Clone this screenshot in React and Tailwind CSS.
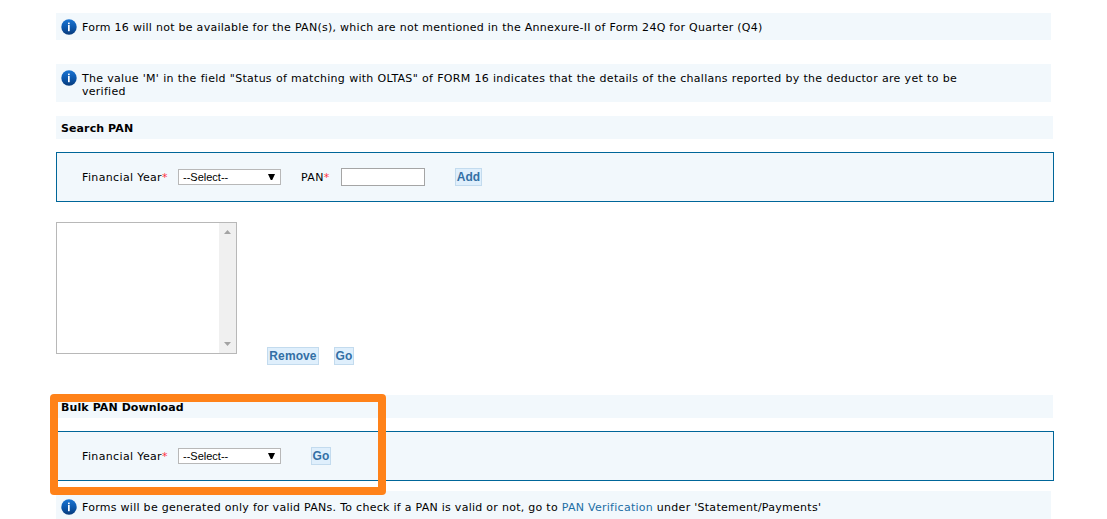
import { useState } from 'react'

const InfoIcon = () => (
  <svg width="16" height="16" viewBox="0 0 16 16" className="shrink-0">
    <defs>
      <linearGradient id="info" x1="0" y1="0" x2="0" y2="1">
        <stop offset="0" stopColor="#1a74d2" />
        <stop offset="0.55" stopColor="#0c57ac" />
        <stop offset="1" stopColor="#083a7a" />
      </linearGradient>
    </defs>
    <circle cx="8" cy="8" r="7.7" fill="url(#info)" />
    <rect x="7" y="3.6" width="1.7" height="1.6" fill="#fff" />
    <rect x="7" y="6" width="1.7" height="6.2" fill="#fff" />
  </svg>
)

const Notice = ({ className, children }) => (
  <div className={`flex w-[995px] bg-[#f2f8fc] pl-[5px] ${className}`}>
    <InfoIcon />
    <p className="ml-[5px] mt-[2px] w-[875px] text-justify leading-[13px] tracking-[0.275px]">{children}</p>
  </div>
)

const Title = ({ className, children }) => (
  <h2 className={`h-[23px] w-[997px] bg-[#f2f8fc] pl-[5px] pt-px text-[11px] font-bold leading-[23px] tracking-[0.1px] ${className}`}>{children}</h2>
)

const Label = ({ children }) => (
  <label className="block whitespace-nowrap pt-[2px] tracking-[0.36px]">
    {children}
    <span className="text-[#ff3040]">*</span>
  </label>
)

const Button = ({ className, children }) => (
  <button
    type="button"
    className={`flex h-[18px] items-center justify-center whitespace-nowrap border border-[#c3dbee] bg-[#dfeffc] font-['Liberation_Sans',sans-serif] text-[12px] font-bold leading-none tracking-[0.1px] text-[#336fa5] ${className}`}
  >
    {children}
  </button>
)

const YearSelect = () => (
  <div className="relative h-4 w-[103px]">
    <select className="block h-4 w-full appearance-none border border-[#b8b8b8] bg-white pl-1 font-['Liberation_Sans',sans-serif] text-[11px] leading-[14px] tracking-normal text-black">
      <option>--Select--</option>
    </select>
    <svg width="7" height="6" viewBox="0 0 7 6" className="pointer-events-none absolute right-[6px] top-[5px]">
      <path d="M0 0h7L4.2 6H2.8z" fill="#000" />
    </svg>
  </div>
)

const Panel = ({ children }) => (
  <div className="mt-[13px] flex h-[50px] w-[998px] items-center border border-[#006699] bg-[#f2f8fc] pl-[25px]">
    {children}
  </div>
)

const App = () => {
  const [pan, setPan] = useState('')

  return (
    <div className="relative h-[519px] w-[1107px] overflow-hidden bg-white pl-14 pt-[13px] font-['DejaVu_Sans',sans-serif] text-[11px] text-black">
      <Notice className="h-[27px] pt-[6px]">
        Form 16 will not be available for the PAN(s), which are not mentioned in the Annexure-II of Form 24Q for Quarter (Q4)
      </Notice>
      <Notice className="mt-6 h-[38px] pt-[6px]">
        The value 'M' in the field "Status of matching with OLTAS" of FORM 16 indicates that the details of the challans reported by the deductor are yet to be verified
      </Notice>

      <Title className="mt-[14px]">Search PAN</Title>
      <Panel>
        <div className="w-24">
          <Label>Financial Year</Label>
        </div>
        <YearSelect />
        <div className="ml-5 w-10">
          <Label>PAN</Label>
        </div>
        <input
          type="text"
          value={pan}
          onChange={(e) => setPan(e.target.value)}
          className="h-[18px] w-[84px] border border-[#a5a5a5] bg-white px-1"
        />
        <Button className="ml-[30px] w-[27px]">Add</Button>
      </Panel>

      <div className="mt-5 flex h-[143px] items-start">
        <div className="flex h-[132px] w-[181px] justify-end border border-[#b8b8b8] bg-white">
          <div className="flex h-full w-[17px] flex-col items-center justify-between bg-[#f0f0f0] py-[7px]">
            <svg width="7" height="4" viewBox="0 0 7 4">
              <path d="M3.5 0 7 4H0z" fill="#a3a3a3" />
            </svg>
            <svg width="7" height="4" viewBox="0 0 7 4">
              <path d="M0 0h7L3.5 4z" fill="#a3a3a3" />
            </svg>
          </div>
        </div>
        <Button className="ml-[30px] w-[52px] self-end">Remove</Button>
        <Button className="ml-[15px] w-5 self-end">Go</Button>
      </div>

      <Title className="mt-[30px]">Bulk PAN Download</Title>
      <Panel>
        <div className="w-24">
          <Label>Financial Year</Label>
        </div>
        <YearSelect />
        <Button className="ml-[30px] w-5">Go</Button>
      </Panel>

      <Notice className="mt-[10px] h-7 pt-2">
        Forms will be generated only for valid PANs. To check if a PAN is valid or not, go to{' '}
        <a href="#" className="text-[#1c6ea4]">PAN Verification</a> under 'Statement/Payments'
      </Notice>

      {/* highlight around the bulk download section */}
      <div className="pointer-events-none absolute left-[50px] top-[394px] h-[101px] w-[336px] rounded-[4px] bg-[#ff8219] [clip-path:polygon(evenodd,0_0,100%_0,100%_100%,0_100%,0_0,8px_8px,328px_8px,328px_93px,8px_93px,8px_8px)]" />
    </div>
  )
}

export default App
